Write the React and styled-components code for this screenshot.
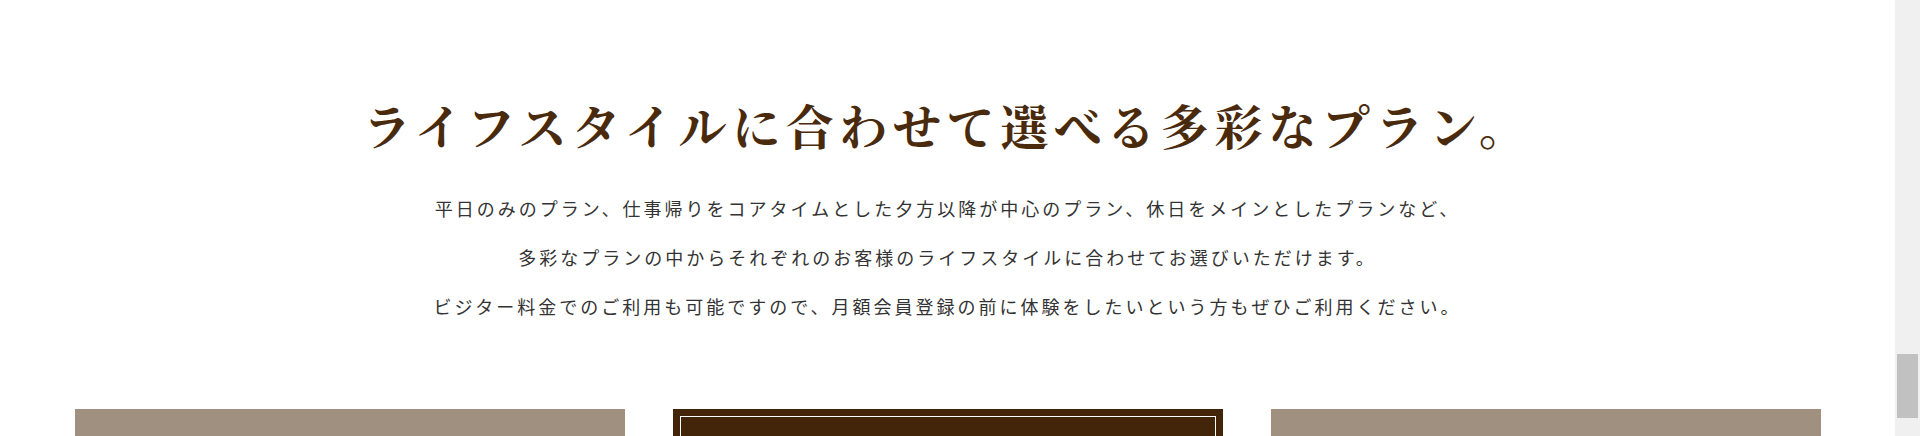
import React from "react";
import styled, { createGlobalStyle } from "styled-components";

const GlobalStyle = createGlobalStyle`
  html, body { margin: 0; padding: 0; background: #fff; }
  body { overflow: hidden; font-family: "Noto Sans CJK JP", sans-serif; }
`;

const Window = styled.div`
  height: 436px;
  display: flex;
  overflow: hidden;
  background: #fff;
`;

const Page = styled.main`
  flex: 1;
  min-width: 0;
`;

const ScrollTrack = styled.div`
  width: 25px;
  flex: none;
  background: #f0f0f0;
  box-sizing: border-box;
  padding: ${(p) => p.$offset}px 2px 0 2px;
`;

const ScrollThumb = styled.div`
  height: ${(p) => p.$size}px;
  background: #c1c1c1;
`;

const PlanSection = styled.section`
  padding-top: 89px;
  text-align: center;
`;

const Title = styled.h2`
  margin: 0;
  font-family: "Noto Serif CJK JP", "Noto Serif JP", "Noto Serif CJK SC", serif;
  font-weight: 700;
  font-size: 48px;
  line-height: 72px;
  letter-spacing: 5.6px;
  color: #4a2a0c;
`;

const Lead = styled.div`
  margin-top: 23px;
  font-family: "Noto Sans CJK JP", sans-serif;
  font-weight: 400;
  font-size: 18px;
  line-height: 49px;
  letter-spacing: 3px;
  color: #333;
`;

const LeadLine = styled.p`
  margin: 0;
`;

const CardRow = styled.div`
  margin: 78px auto 0;
  width: 1746px;
  display: grid;
  grid-template-columns: repeat(3, 1fr);
  gap: 48px;
`;

const Card = styled.div`
  height: 130px;
  padding: 7px;
  box-sizing: border-box;
  background: ${(p) => (p.$featured ? "#43250a" : "#a09080")};
`;

const CardFrame = styled.div`
  height: 100%;
  box-sizing: border-box;
  border: ${(p) => (p.$featured ? "1px solid #ffffff" : "none")};
`;

export default function App() {
  return (
    <>
      <GlobalStyle />
      <Window>
        <Page>
          <PlanSection>
            <Title>ライフスタイルに合わせて選べる多彩なプラン。</Title>
            <Lead>
              <LeadLine>平日のみのプラン、仕事帰りをコアタイムとした夕方以降が中心のプラン、休日をメインとしたプランなど、</LeadLine>
              <LeadLine>多彩なプランの中からそれぞれのお客様のライフスタイルに合わせてお選びいただけます。</LeadLine>
              <LeadLine>ビジター料金でのご利用も可能ですので、月額会員登録の前に体験をしたいという方もぜひご利用ください。</LeadLine>
            </Lead>
            <CardRow>
              <Card><CardFrame /></Card>
              <Card $featured><CardFrame $featured /></Card>
              <Card><CardFrame /></Card>
            </CardRow>
          </PlanSection>
        </Page>
        <ScrollTrack $offset={354}>
          <ScrollThumb $size={64} />
        </ScrollTrack>
      </Window>
    </>
  );
}
